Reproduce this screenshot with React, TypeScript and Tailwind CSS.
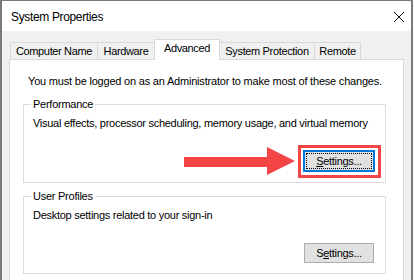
import React from "react";

const font = "font-['Liberation_Sans',Arial,sans-serif]";

function Tab({ label, selected, w, first }: { label: string; selected?: boolean; w: number; first?: boolean }) {
  return (
    <div
      style={{ width: w }}
      className={
        (first ? "" : "-ml-px ") +
        (selected
          ? "h-[21px] bg-white border border-b-0 border-[#d9d9d9] flex items-center justify-center pb-[3px] relative z-20"
          : "h-[18px] bg-[#f0f0f0] border border-[#d9d9d9] flex items-center justify-center")
      }
    >
      <span className="text-[11px] tracking-[-0.35px] leading-[13px]">{label}</span>
    </div>
  );
}

export default function App() {
  return (
    <div className={`w-[414px] h-[280px] overflow-hidden bg-white text-black ${font}`}>
      <div className="w-[413px] h-[281px] flex flex-col border-l-2 border-r-2 border-t border-[#7a7a7a] bg-[#f0f0f0]">
        {/* Title bar */}
        <div className="h-[30px] bg-white flex items-center justify-between pl-[9px] pr-[6px] pt-[2px]">
          <span className="text-[12px] tracking-[-0.35px] leading-[14px]">System Properties</span>
          <svg width="12" height="12" viewBox="0 0 12 12">
            <path d="M1 1 L11 11 M11 1 L1 11" stroke="#111" strokeWidth="1" fill="none" />
          </svg>
        </div>
        {/* Body */}
        <div className="flex-1 pl-[7px] pt-[8px] flex flex-col">
          <div className="flex items-end ml-px -mb-px relative z-10">
            <Tab label="Computer Name" w={88} first />
            <Tab label="Hardware" w={58} />
            <Tab label="Advanced" w={66} selected />
            <Tab label="System Protection" w={96} />
            <Tab label="Remote" w={47} />
          </div>
          <div className="w-[395px] flex-1 bg-white border border-[#d9d9d9] flex flex-col">
            <div className="pl-[18px] pt-[14px] text-[11px] tracking-[-0.2px] leading-[15px] h-[29px]">
              You must be logged on as an Administrator to make most of these changes.
            </div>
            {/* Performance */}
            <div className="ml-[13px] mt-[15px] w-[363px] h-[79px] border border-[#dcdcdc] relative flex flex-col">
              <span className="absolute left-[7px] -top-[8px] bg-white px-[2px] text-[11px] tracking-[-0.25px] leading-[15px]">
                Performance
              </span>
              <div className="pl-[9px] pt-[11px] text-[11px] tracking-[-0.27px] leading-[15px]">
                Visual effects, processor scheduling, memory usage, and virtual memory
              </div>
              <div className="mt-auto flex justify-end pr-[10px] pb-[10px]">
                <div className="relative">
                  <svg
                    width="112"
                    height="30"
                    viewBox="0 0 112 30"
                    className="absolute -left-[119px] -top-[4px]"
                  >
                    <rect x="0" y="11" width="84" height="10" fill="#f34545" />
                    <polygon points="83,1 111,15 83,29" fill="#f34545" />
                  </svg>
                  <div className="absolute -left-[5px] -top-[5px] w-[83px] h-[33px] border-[3px] border-[#f34545]" />
                  <button className="w-[72px] h-[22px] bg-[#e1e1e1] border-2 border-[#0078d7] p-0 flex">
                    <div className="flex-1 m-px border border-dotted border-black flex items-center justify-center">
                      <span className="text-[11px] tracking-[-0.3px] leading-[13px]">
                        <span className="underline">S</span>ettings...
                      </span>
                    </div>
                  </button>
                </div>
              </div>
            </div>
            {/* User Profiles */}
            <div className="ml-[13px] mt-[13px] w-[363px] h-[78px] border border-[#dcdcdc] relative flex flex-col">
              <span className="absolute left-[7px] -top-[8px] bg-white px-[2px] text-[11px] tracking-[-0.25px] leading-[15px]">
                User Profiles
              </span>
              <div className="pl-[9px] pt-[11px] text-[11px] tracking-[-0.27px] leading-[15px]">
                Desktop settings related to your sign-in
              </div>
              <div className="mt-auto flex justify-end pr-[11px] pb-[10px]">
                <button className="w-[70px] h-[20px] bg-[#e1e1e1] border border-[#adadad] p-0 flex items-center justify-center">
                  <span className="text-[11px] tracking-[-0.3px] leading-[13px]">
                    S<span className="underline">e</span>ttings...
                  </span>
                </button>
              </div>
            </div>
          </div>
        </div>
      </div>
    </div>
  );
}
